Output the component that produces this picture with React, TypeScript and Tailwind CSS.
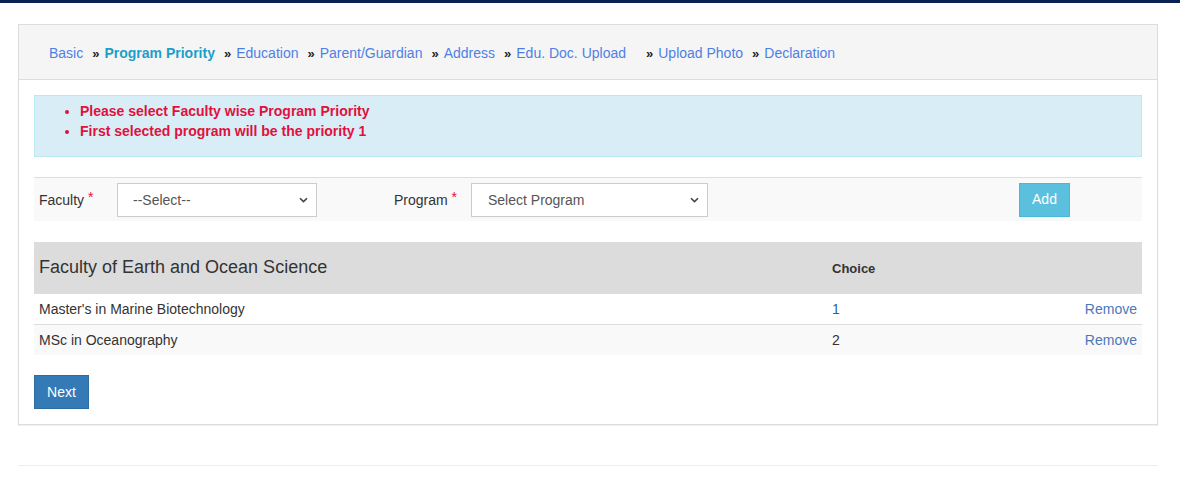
const steps = [
  { label: 'Basic' },
  { label: 'Program Priority', active: true },
  { label: 'Education' },
  { label: 'Parent/Guardian' },
  { label: 'Address' },
  { label: 'Edu. Doc. Upload', wide: true },
  { label: 'Upload Photo' },
  { label: 'Declaration' },
];

const choices = [
  { name: "Master's in Marine Biotechnology", order: '1' },
  { name: 'MSc in Oceanography', order: '2' },
];

function Chevron() {
  return (
    <svg
      className="pointer-events-none absolute right-[9px] top-1/2 -translate-y-1/2"
      width="9"
      height="6"
      viewBox="0 0 9 6"
      fill="none"
    >
      <path d="M1 1.2 4.5 4.6 8 1.2" stroke="#444" strokeWidth="1.6" />
    </svg>
  );
}

export default function App() {
  return (
    <div className="min-h-[492px] bg-white font-['Liberation_Sans',Arial,sans-serif] text-[14px] text-[#333]">
      <div className="h-[3px] bg-[#0b2154]" />

      <div className="ml-[18px] mt-[21px] w-[1140px] border border-[#ddd] shadow-[0_1px_1px_rgba(0,0,0,0.06)]">
        {/* step breadcrumb */}
        <div className="flex h-[55px] items-center border-b border-[#ddd] bg-[#f5f5f5] pl-[30px] pt-[3px]">
          {steps.map((s, i) => (
            <div key={s.label} className="flex items-center">
              {i > 0 && (
                <span
                  className={`mr-[5px] font-bold text-[13px] text-[#222] ${
                    steps[i - 1].wide ? 'ml-[20px]' : 'ml-[9px]'
                  }`}
                >
                  »
                </span>
              )}
              <a
                href="#"
                className={
                  s.active
                    ? 'font-bold text-[#1aa0c8]'
                    : 'text-[#4f7fe6]'
                }
              >
                {s.label}
              </a>
            </div>
          ))}
        </div>

        <div className="p-[15px]">
          {/* notice */}
          <div className="border border-[#bce8f1] bg-[#d9edf7] pb-[15px] pt-[5px]">
            <ul className="list-disc pl-[45px] text-[14px] font-bold leading-[20px] text-[#e0113d]">
              <li>Please select Faculty wise Program Priority</li>
              <li>First selected program will be the priority 1</li>
            </ul>
          </div>

          {/* selection row */}
          <div className="mt-[20px] flex h-[44px] items-center border-t border-[#ddd] bg-[#f9f9f9]">
            <label className="w-[83px] pl-[5px] pt-[2px] text-[#333]">
              Faculty <span className="relative -top-[3px] text-[#e0113d]">*</span>
            </label>
            <div className="relative">
              <select className="h-[34px] w-[200px] appearance-none border border-[#ccc] bg-white pl-[15px] pt-[2px] text-[14px] text-[#555] outline-none">
                <option>--Select--</option>
              </select>
              <Chevron />
            </div>
            <label className="ml-[77px] w-[77px] pt-[2px] text-[#333]">
              Program <span className="relative -top-[3px] text-[#e0113d]">*</span>
            </label>
            <div className="relative">
              <select className="h-[34px] w-[237px] appearance-none border border-[#ccc] bg-white pl-[16px] pt-[2px] text-[14px] text-[#555] outline-none">
                <option>Select Program</option>
              </select>
              <Chevron />
            </div>
            <button className="ml-[311px] h-[34px] w-[51px] border border-[#46b8da] bg-[#5bc0de] text-[14px] text-white">
              Add
            </button>
          </div>

          {/* chosen programs */}
          <table className="mt-[21px] w-full table-fixed border-collapse">
            <thead>
              <tr className="h-[51px] bg-[#dcdcdc]">
                <th className="w-[793px] pl-[5px] pt-[1px] text-left text-[18px] font-normal text-[#333]">
                  Faculty of Earth and Ocean Science
                </th>
                <th className="w-[200px] pl-[5px] pt-[3px] text-left text-[13px] font-bold text-[#333]">
                  Choice
                </th>
                <th />
              </tr>
            </thead>
            <tbody>
              {choices.map((c, i) => (
                <tr
                  key={c.name}
                  className={`h-[31px] border-t border-[#ddd] ${i % 2 ? 'bg-[#f9f9f9]' : 'bg-white'}`}
                >
                  <td className="pl-[5px] pt-[2px]">{c.name}</td>
                  <td className={`pl-[5px] pt-[2px] ${i === 0 ? 'text-[#2f5f9c]' : ''}`}>{c.order}</td>
                  <td className="pr-[5px] pt-[2px] text-right">
                    <a href="#" className="text-[#4a78b8]">
                      Remove
                    </a>
                  </td>
                </tr>
              ))}
            </tbody>
          </table>

          <button className="mt-[20px] h-[34px] w-[55px] border border-[#2e6da4] bg-[#337ab7] text-[14px] text-white">
            Next
          </button>
        </div>
      </div>

      <hr className="ml-[18px] mt-[40px] w-[1140px] border-t border-[#eee]" />
    </div>
  );
}
